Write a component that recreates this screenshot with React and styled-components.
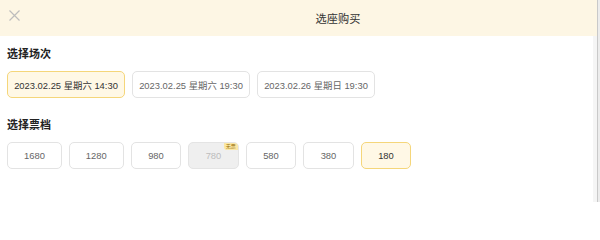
import React, { useState } from "react";
import styled, { createGlobalStyle } from "styled-components";

const GlobalStyle = createGlobalStyle`
    html, body {
        margin: 0;
        padding: 0;
        background: #fff;
    }
    body {
        font-family: "Liberation Sans", "Noto Sans CJK SC", sans-serif;
        color: #333;
    }
`;

const Page = styled.div`
    display: flex;
    width: 600px;
    height: 202px;
    overflow: hidden;
`;

const Panel = styled.div`
    flex: 1;
    display: flex;
    flex-direction: column;
`;

const Edge = styled.div`
    width: 2px;
    border-left: 1px solid #c9c9c9;
    background: #ececec;
`;

const Header = styled.div`
    display: flex;
    align-items: center;
    height: 36px;
    background: #fdf6e4;
`;

const Close = styled.button`
    display: flex;
    align-items: center;
    justify-content: center;
    width: 29px;
    height: 36px;
    padding: 0;
    border: 0;
    background: none;
    cursor: pointer;
    margin-top: -6px;
`;

const Title = styled.div`
    flex: 1;
    padding-left: 50px;
    text-align: center;
    font-size: 11.2px;
    color: #333;
    margin-top: -1px;
`;

const Body = styled.div`
    flex: 1;
    padding: 0 7px;
    box-shadow: inset -4px 0 0 #f5f5f5;
`;

const Label = styled.div`
    margin: ${({ first }) => (first ? "11px" : "20px")} 0 10px;
    font-size: 11px;
    line-height: 14px;
    font-weight: bold;
    color: #222;
`;

const Row = styled.div`
    display: flex;
    gap: 7px;
`;

const Chip = styled.button`
    position: relative;
    height: 27px;
    box-sizing: border-box;
    min-width: ${({ wide }) => (wide ? "118px" : "50.5px")};
    padding: 0 ${({ wide }) => (wide ? "6px" : "16px")};
    border: 1px solid #e3e3e3;
    border-radius: 5px;
    background: #fff;
    font-family: inherit;
    font-size: 9.4px;
    color: #666;
    cursor: pointer;
    white-space: nowrap;
    &.active {
        background: #fff8e6;
        border-color: #f5d67a;
        color: #333;
    }
    &:disabled {
        background: #efefef;
        border-color: #e4e4e4;
        color: #bdbdbd;
        cursor: default;
    }
`;

const Badge = styled.span`
    position: absolute;
    top: 0;
    right: 0;
    padding: 0 2px;
    height: 7px;
    line-height: 7px;
    font-size: 5px;
    color: #9a7410;
    background: #fbe7a4;
    border-radius: 0 4px 0 3px;
`;

const sessions = [
    "2023.02.25 星期六 14:30",
    "2023.02.25 星期六 19:30",
    "2023.02.26 星期日 19:30",
];

const prices = [
    { value: 1680 },
    { value: 1280 },
    { value: 980 },
    { value: 780, soldOut: true },
    { value: 580 },
    { value: 380 },
    { value: 180 },
];

function App() {
    const [session, setSession] = useState(0);
    const [price, setPrice] = useState(6);

    return (
        <>
            <GlobalStyle />
            <Page>
                <Panel>
                    <Header>
                        <Close aria-label="关闭">
                            <svg width="11" height="11" viewBox="0 0 11 11">
                                <path
                                    d="M0.5 0.5 L10.5 10.5 M10.5 0.5 L0.5 10.5"
                                    stroke="#bdbdbd"
                                    strokeWidth="1.2"
                                    fill="none"
                                />
                            </svg>
                        </Close>
                        <Title>选座购买</Title>
                    </Header>
                    <Body>
                        <Label first>选择场次</Label>
                        <Row>
                            {sessions.map((text, index) => (
                                <Chip
                                    key={`session-${index}`}
                                    wide
                                    className={index === session ? "active" : ""}
                                    onClick={() => setSession(index)}
                                >
                                    {text}
                                </Chip>
                            ))}
                        </Row>
                        <Label>选择票档</Label>
                        <Row>
                            {prices.map((item, index) => (
                                <Chip
                                    key={`price-${item.value}`}
                                    disabled={item.soldOut}
                                    className={index === price ? "active" : ""}
                                    onClick={() => setPrice(index)}
                                >
                                    {item.value}
                                    {item.soldOut && <Badge>无票</Badge>}
                                </Chip>
                            ))}
                        </Row>
                    </Body>
                </Panel>
                <Edge />
            </Page>
        </>
    );
}

export default App;
